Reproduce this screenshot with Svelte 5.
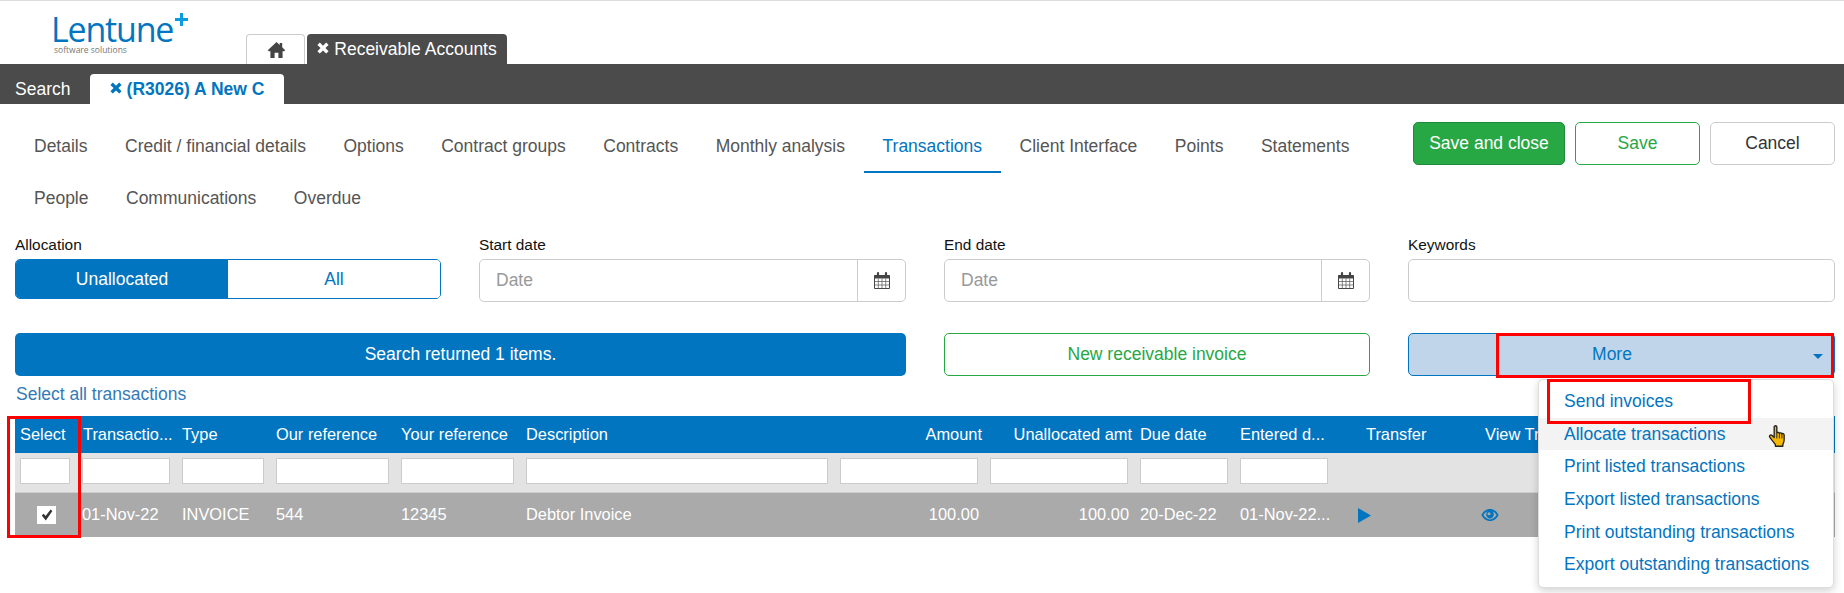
<script>
  const navRow1 = ['Details','Credit / financial details','Options','Contract groups','Contracts','Monthly analysis','Transactions','Client Interface','Points','Statements'];
  const navRow2 = ['People','Communications','Overdue'];
  const cols = [
    { h:'Select', f:true },
    { h:'Transactio...', v:'01-Nov-22', f:true },
    { h:'Type', v:'INVOICE', f:true },
    { h:'Our reference', v:'544', f:true },
    { h:'Your reference', v:'12345', f:true },
    { h:'Description', v:'Debtor Invoice', f:true },
    { h:'Amount', v:'100.00', f:true, right:true },
    { h:'Unallocated amt', v:'100.00', f:true, right:true },
    { h:'Due date', v:'20-Dec-22', f:true },
    { h:'Entered d...', v:'01-Nov-22...', f:true },
    { h:'Transfer' },
    { h:'View Tr' }
  ];
  const menu = ['Send invoices','Allocate transactions','Print listed transactions','Export listed transactions','Print outstanding transactions','Export outstanding transactions'];
</script>

{#snippet cross()}
  <svg class="x" viewBox="0 0 12 12"><path d="M2.800 0.600 6 3.800 9.200 0.600 11.600 3 8.400 6 11.600 9.200 9.200 11.600 6 8.400 2.800 11.600 0.400 9.200 3.600 6 0.400 3Z" fill="currentColor"/></svg>
{/snippet}

{#snippet calendar()}
  <svg class="cal" viewBox="0 0 16 17">
    <path d="M.5 3.500h15v13H.5z" fill="#fff" stroke="#444" stroke-width="1"/>
    <path d="M.5 3h15v3.500H.5z" fill="#444"/>
    <path d="M4 1.200v2.800M12 1.200v2.800" stroke="#444" stroke-width="2.200" stroke-linecap="round"/>
    <path d="M.5 9.500h15M.5 13h15M4.300 6.500v10M8 6.500v10M11.700 6.500v10" stroke="#666" stroke-width=".8" fill="none"/>
  </svg>
{/snippet}

<div class="page">
  <header class="top">
    <div class="logo">
      <span class="logo-word">Lentune</span>
      <span class="logo-plus"></span>
      <span class="logo-sub">software solutions</span>
    </div>
    <div class="top-tabs">
      <div class="home-tab">
        <svg viewBox="0 0 20 18" class="home"><path d="M10 0.500 0.800 9.200 2 10.400H3.600V17.500H8V12H12V17.500H16.400V10.400H18L19.200 9.200 16 6.200V1.500H13.400V3.800Z" fill="#444"/></svg>
      </div>
      <div class="rec-tab">{@render cross()}<span>Receivable Accounts</span></div>
    </div>
  </header>

  <div class="bar">
    <span class="search">Search</span>
    <div class="active-tab">{@render cross()}<span>(R3026) A New C</span></div>
  </div>

  <div class="nav-area">
    <div class="nav">
      <div class="nav-row">
        {#each navRow1 as n}<span class="nav-item" class:active={n === 'Transactions'}>{n}</span>{/each}
      </div>
      <div class="nav-row">
        {#each navRow2 as n}<span class="nav-item">{n}</span>{/each}
      </div>
    </div>
    <div class="actions">
      <button class="btn primary w152">Save and close</button>
      <button class="btn outline-green w125">Save</button>
      <button class="btn plain w125">Cancel</button>
    </div>
  </div>

  <div class="grid filters">
    <div>
      <div class="label">Allocation</div>
      <div class="toggle"><span class="on">Unallocated</span><span class="off">All</span></div>
    </div>
    <div>
      <div class="label">Start date</div>
      <div class="date"><span class="ph">Date</span><span class="addon">{@render calendar()}</span></div>
    </div>
    <div>
      <div class="label">End date</div>
      <div class="date"><span class="ph">Date</span><span class="addon">{@render calendar()}</span></div>
    </div>
    <div>
      <div class="label">Keywords</div>
      <div class="date"></div>
    </div>
  </div>

  <div class="grid results">
    <div class="result">Search returned 1 items.</div>
    <div class="new-inv">New receivable invoice</div>
    <div class="more">More<span class="caret"></span></div>
  </div>

  <div class="select-all">Select all transactions</div>

  <div class="table">
    <div class="t-row t-head">
      {#each cols as c}<div class="cell" class:right={c.right}>{c.h}</div>{/each}
    </div>
    <div class="t-row t-filter">
      {#each cols as c}<div class="cell">{#if c.f}<span class="f-input"></span>{/if}</div>{/each}
    </div>
    <div class="t-row t-data">
      <div class="cell center"><span class="check"><svg viewBox="0 0 14 14"><path d="M1.800 7.600 3.600 5.800 5.600 8 10.600 1.600 12.400 3 5.800 12.600Z" fill="#333"/></svg></span></div>
      {#each cols.slice(1, 10) as c}<div class="cell" class:right={c.right} class:pr={c.right}>{c.v}</div>{/each}
      <div class="cell icon-cell"><svg class="play" viewBox="0 0 13 15"><path d="M0 0 13 7.500 0 15Z" fill="#0275c0"/></svg></div>
      <div class="cell icon-cell"><svg class="eye" viewBox="0 0 18 14"><path d="M9 1C5 1 2 3.600.4 7 2 10.400 5 13 9 13s7-2.600 8.600-6C16 3.600 13 1 9 1Z" fill="#0275c0"/><path d="M2.400 7C3.800 4.800 5.400 3.600 6.600 3.200 5.600 4.200 5.200 5.400 5.200 6.400 5.200 8.600 7 10.400 9 10.400s3.800-1.800 3.800-4c0-1-.4-2.200-1.400-3.200 1.200.4 2.800 1.600 4.200 3.800-1.600 2.400-3.800 4.400-6.600 4.400S4 9.400 2.400 7Z" fill="#aaa"/><circle cx="8" cy="5.800" r="1.500" fill="#aaa"/></svg></div>
    </div>
  </div>

  <div class="menu">
    {#each menu as m, i}<div class="menu-item" class:hover={i === 1}>{m}</div>{/each}
  </div>

  <svg class="hand" viewBox="0 0 20 24">
    <path d="M6.500 2c0-1.800 2.800-1.800 2.800 0v6.500c.2-1.200 2.600-1.200 2.700.3.300-1 2.500-1 2.600.5.500-.8 2.400-.6 2.400 1v5.200c0 2.200-.6 3.500-1.400 5v1.800H7.800v-1.800C6 18 3.800 15.500 2 12.800c-1.200-1.800.8-3.200 2.300-1.800l2.200 2.100Z" fill="#f5b800" stroke="#222" stroke-width="1.400" stroke-linejoin="round"/>
    <path d="M9.300 9v5M12 9v5M14.600 9.500v4.500" stroke="#222" stroke-width="1" fill="none"/>
  </svg>

  <div class="mark m-more"></div>
  <div class="mark m-send"></div>
  <div class="mark m-select"></div>
</div>

<style>
  :global(body) { margin: 0; background: #fff; }
  .page {
    position: relative;
    width: 1844px;
    height: 593px;
    overflow: hidden;
    font-family: "Liberation Sans", Arial, sans-serif;
    font-size: 17.500px;
    color: #444;
    box-sizing: border-box;
    border-top: 1px solid #ddd;
  }
  .top { height: 63px; display: flex; align-items: flex-end; }
  .logo { position: relative; width: 192px; margin-left: 54px; height: 49px; align-self: flex-start; margin-top: 7px; }
  .logo-word {
    position: absolute; left: -3px; top: 5px;
    font-family: "Open Sans", sans-serif; font-weight: 400;
    font-size: 34px; line-height: 32px; color: #0275c0; letter-spacing: -1.200px;
  }
  .logo-plus { position: absolute; left: 121px; top: 5px; width: 13px; height: 13px;
    background: linear-gradient(#0a9be0,#0a9be0) center/100% 3px no-repeat, linear-gradient(#0a9be0,#0a9be0) center/3px 100% no-repeat; }
  .logo-sub { position: absolute; left: 0; top: 37px; font-family: "Open Sans", sans-serif; font-size: 8.500px; line-height: 10px; color: #777; }
  .top-tabs { display: flex; gap: 2px; height: 30px; }
  .home-tab { width: 59px; padding-left: 2px; border: 1px solid #ccc; border-bottom: 0; border-radius: 4px 4px 0 0; display: flex; align-items: center; justify-content: center; box-sizing: border-box; }
  .home { width: 19px; height: 18px; }
  .rec-tab { width: 200px; background: #4b4b4b; color: #fff; border-radius: 4px 4px 0 0; display: flex; align-items: center; justify-content: center; gap: 5px; }
  .x { width: 12px; height: 12px; flex: none; margin-top: -2px; }

  .bar { height: 40px; background: #4b4b4b; display: flex; align-items: flex-end; }
  .search { width: 90px; padding-left: 15px; box-sizing: border-box; color: #fff; line-height: 30px; height: 30px; }
  .active-tab { width: 194px; height: 30px; background: #fff; color: #0275c0; font-weight: 700; border-radius: 4px 4px 0 0; display: flex; align-items: center; justify-content: center; gap: 5px; }

  .nav-area { display: flex; justify-content: space-between; height: 138px; padding: 17px 9px 0 15px; box-sizing: border-box; }
  .nav-row { display: flex; height: 52px; }
  .nav-item { padding: 0 18.750px; line-height: 51px; height: 52px; box-sizing: border-box; color: #555; }
  .nav-item:first-child { padding-left: 19px; }
  .nav-item.active { color: #0275c0; border-bottom: 2px solid #0275c0; }
  .actions { display: flex; gap: 10px; margin-top: 1px; }
  .btn { height: 43px; border-radius: 5px; font: inherit; padding: 0; background: #fff; box-sizing: border-box; }
  .w152 { width: 152px; }
  .w125 { width: 125px; }
  .primary { background: #28a745; border: 1px solid #1f8a3a; color: #fff; }
  .outline-green { border: 1px solid #28a745; color: #28a745; }
  .plain { border: 1px solid #ccc; color: #333; }

  .grid { display: grid; grid-template-columns: 426px 427px 426px 427px; gap: 38px; padding: 0 0 0 15px; }
  .filters { height: 91px; }
  .label { font-size: 15.400px; line-height: 16px; color: #111; height: 22px; margin-top: -5px; }
  .toggle { display: flex; height: 40px; border: 1px solid #0275c0; border-radius: 5px; overflow: hidden; box-sizing: border-box; }
  .toggle span { flex: 1; display: flex; align-items: center; justify-content: center; }
  .on { background: #0275c0; color: #fff; }
  .off { background: #fff; color: #0275c0; }
  .date { height: 43px; border: 1px solid #ccc; border-radius: 5px; box-sizing: border-box; display: flex; align-items: center; justify-content: space-between; }
  .ph { color: #999; padding-left: 16px; }
  .addon { width: 48px; height: 100%; border-left: 1px solid #ccc; box-sizing: border-box; display: flex; align-items: center; justify-content: center; }
  .cal { width: 16px; height: 17px; }

  .results > div { height: 43px; border-radius: 5px; display: flex; align-items: center; justify-content: center; box-sizing: border-box; }
  .result { background: #0275c0; color: #fff; grid-column: span 2; }
  .new-inv { border: 1px solid #28a745; color: #28a745; }
  .more { position: relative; padding-right: 19px; background: #c0d5e9; border: 1px solid #0275c0; color: #0275c0; }
  .caret { position: absolute; right: 11px; top: 20px; border: 5px solid transparent; border-top-color: #0275c0; border-bottom: 0; }

  .select-all { margin-top: 9px; padding-left: 16px; color: #337ab7; line-height: 19px; height: 31px; }

  .table { margin: 0 9px 0 15px; font-size: 16.400px; }
  .t-row { display: grid; grid-template-columns: 67px 100px 94px 125px 125px 314px 150px 150px 100px 118px 127px 1fr; }
  .cell { white-space: nowrap; box-sizing: border-box; min-width: 0; }
  .t-head { height: 37px; background: #0275c0; color: #fff; line-height: 36px; }
  .t-head .cell:nth-child(1) { padding-left: 5px; }
  .t-head .cell:nth-child(2) { padding-left: 1px; }
  .t-head .cell:nth-child(11) { padding-left: 8px; }
  .right { text-align: right; }
  .t-head .cell:nth-child(7), .t-head .cell:nth-child(8) { padding-right: 8px; }
  .t-filter { height: 40px; background: #e3e3e3; border-bottom: 1px solid #ccc; box-sizing: border-box; padding-top: 5px; }
  .t-filter .cell { padding-right: 12px; }
  .t-filter .cell:first-child { padding-left: 5px; }
  .t-filter .cell:nth-child(10) { padding-right: 30px; }
  .f-input { display: block; height: 26px; background: #fff; border: 1px solid #ccc; box-sizing: border-box; }
  .t-data { height: 44px; background: #aaa; color: #fff; line-height: 43px; }
  .t-data .pr { padding-right: 11px; }
  .center { display: flex; align-items: center; justify-content: center; padding-right: 4px; }
  .check { width: 19px; height: 18px; background: #fff; display: flex; align-items: center; justify-content: center; }
  .check svg { width: 14px; height: 14px; }
  .icon-cell { display: flex; align-items: center; }
  .play { width: 13px; height: 15px; }
  .eye { width: 18px; height: 14px; margin-left: -4px; }

  .menu {
    position: absolute; left: 1538px; top: 378px; width: 296px; height: 209px;
    background: #fff; border: 1px solid #ddd; border-radius: 5px; box-sizing: border-box;
    box-shadow: 0 3px 8px rgba(0,0,0,.18); padding-top: 5px;
  }
  .menu-item { height: 32.700px; line-height: 32.700px; padding-left: 25px; color: #0275c0; }
  .menu-item.hover { background: #f3f3f3; }
  .hand { position: absolute; left: 1768px; top: 424px; width: 19px; height: 23px; }

  .mark { position: absolute; border: 3px solid #f00; box-sizing: border-box; }
  .m-more { left: 1496px; top: 332px; width: 338px; height: 45px; }
  .m-send { left: 1547px; top: 378px; width: 204px; height: 45px; }
  .m-select { left: 7px; top: 415px; width: 74px; height: 122px; }
</style>
